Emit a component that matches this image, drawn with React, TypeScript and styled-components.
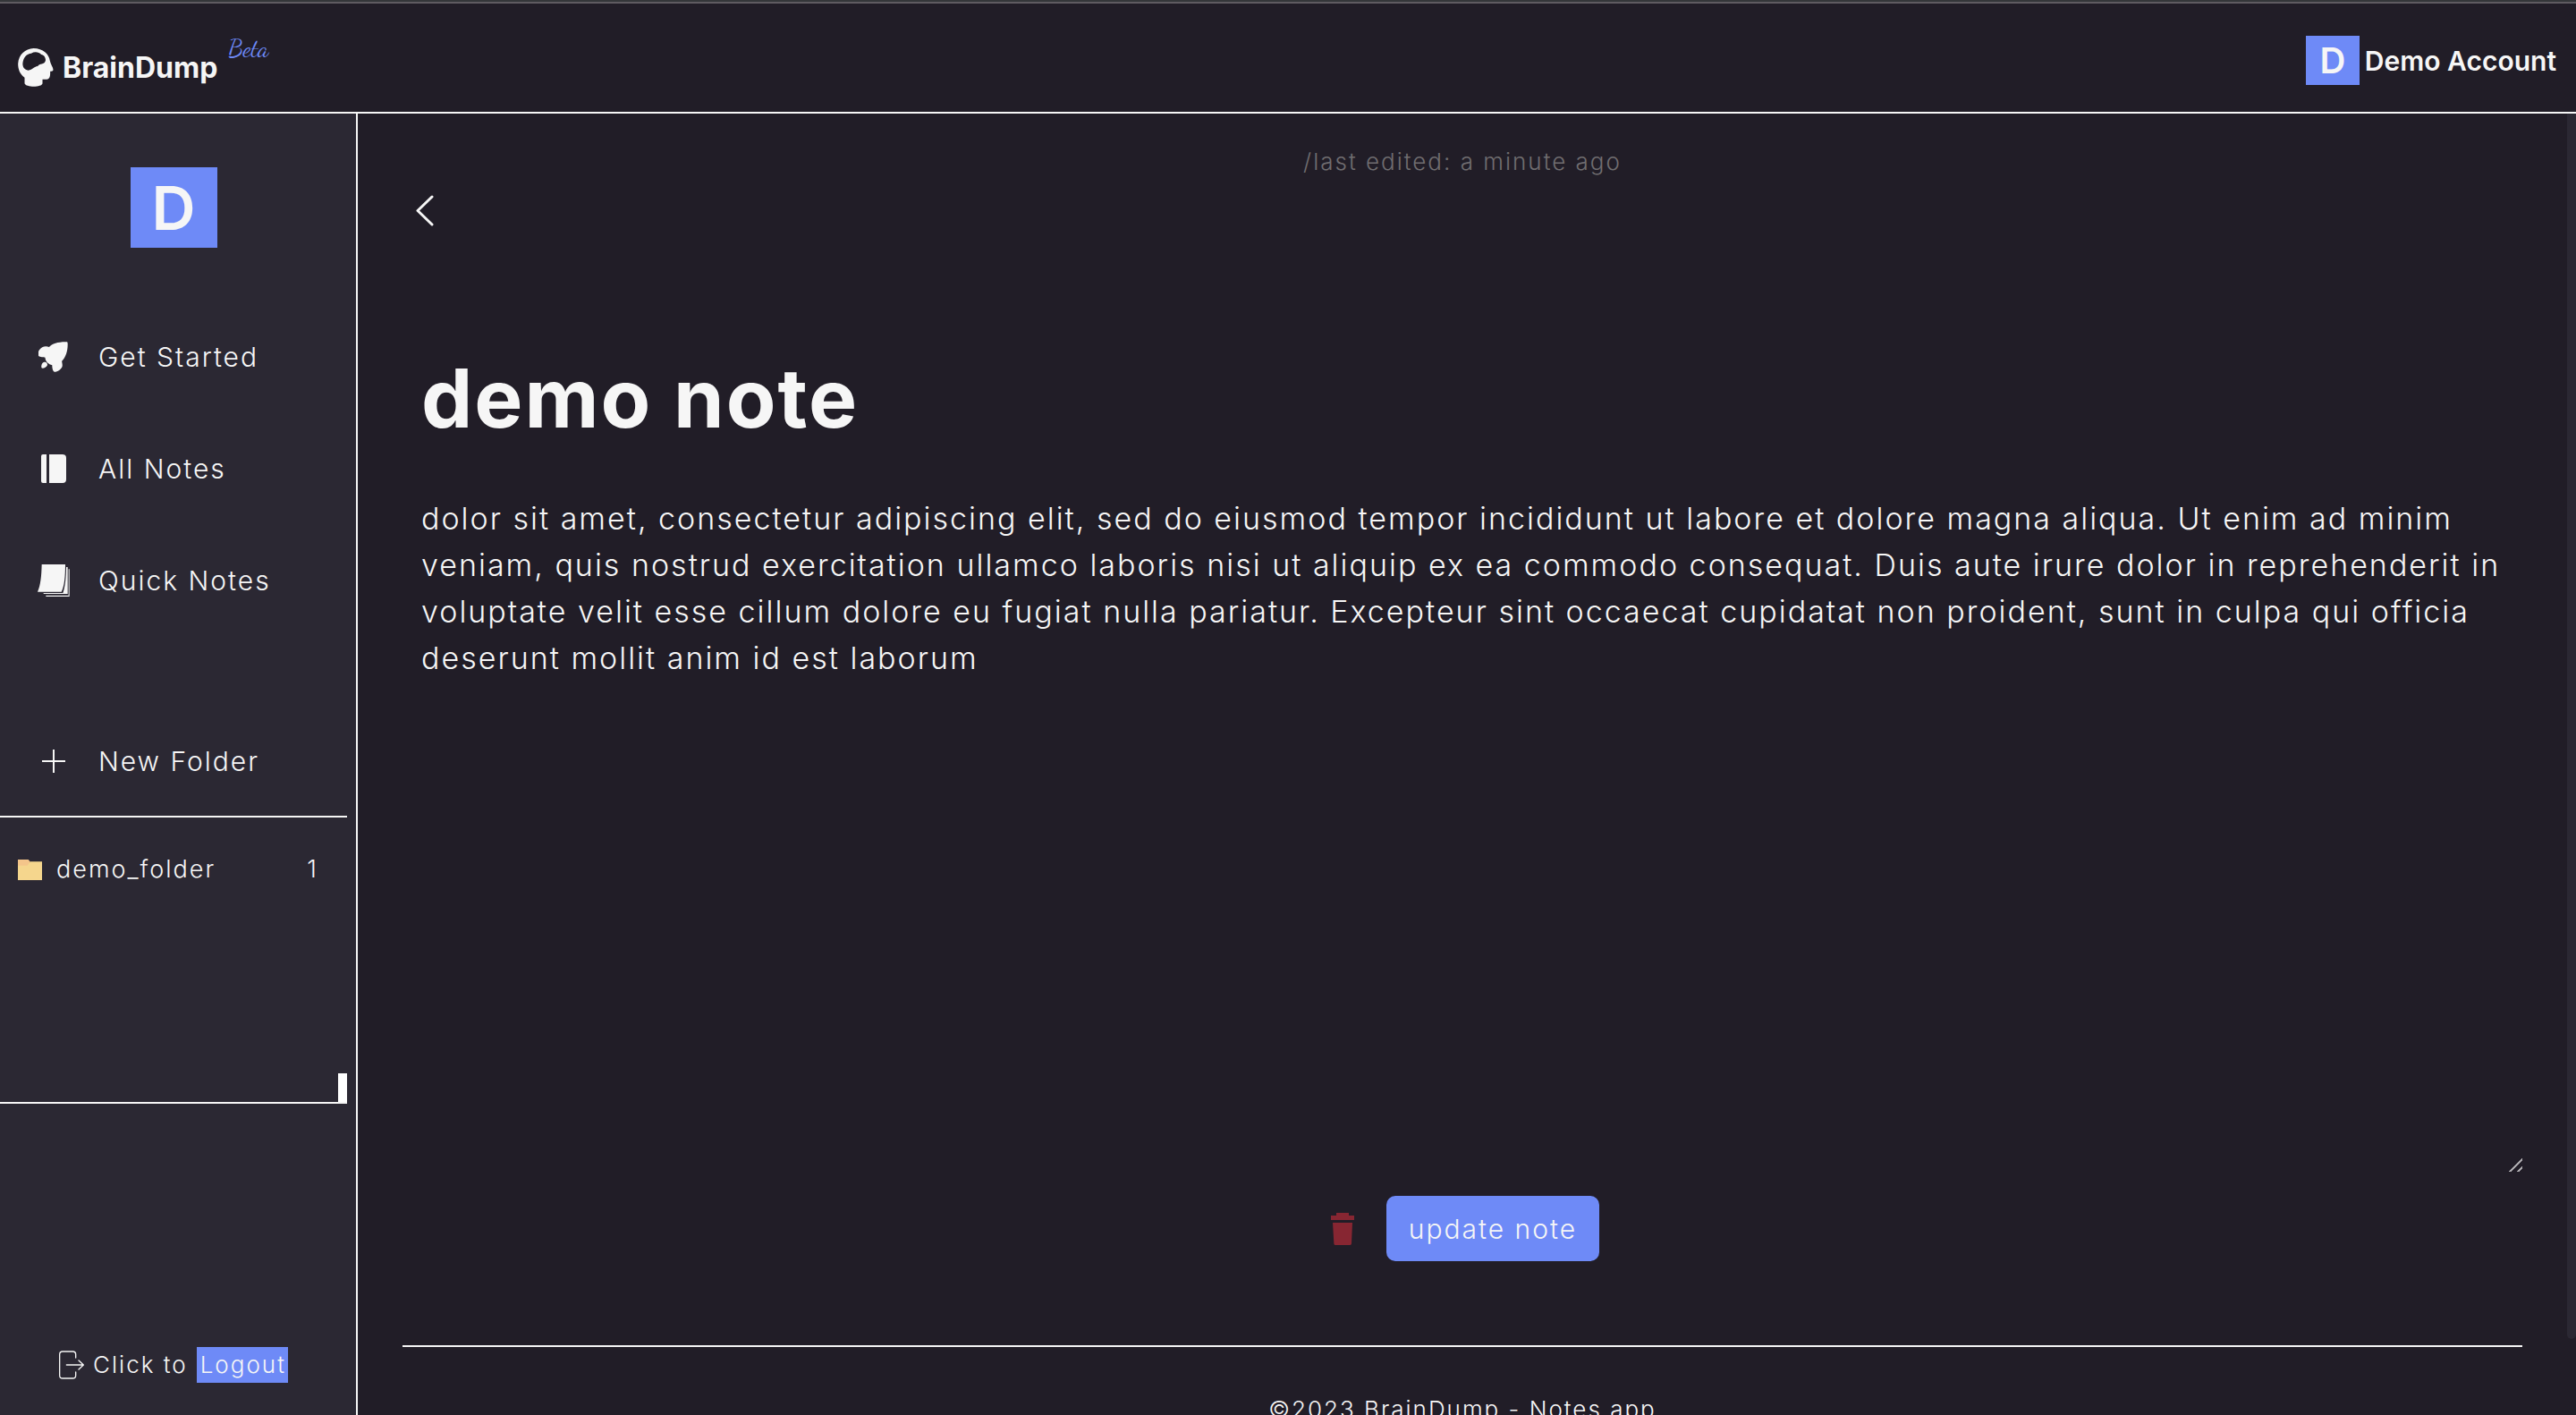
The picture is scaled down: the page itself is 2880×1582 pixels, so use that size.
import React, { useState } from 'react';
import styled, { createGlobalStyle } from 'styled-components';

const color = {
  page: '#211d27',
  panel: '#2b2833',
  text: '#f6f6f6',
  muted: '#706d70',
  accent: '#6e8af7',
  danger: '#872632',
};

const GlobalStyle = createGlobalStyle`
  *, *::before, *::after { box-sizing: border-box; }
  body {
    margin: 0;
    background: ${color.page};
    color: ${color.text};
    font-family: Inter, "Liberation Sans", sans-serif;
    font-size: 26px;
    font-weight: 300;
    letter-spacing: 2px;
    line-height: 36px;
  }
  button, input, textarea { font: inherit; letter-spacing: inherit; color: inherit; }
  svg { display: block; }
`;

const Page = styled.div`
  display: flex;
  flex-direction: column;
  height: 100vh;
  overflow: hidden;
  border-top: 2px solid #343639;
`;

const TopBar = styled.header`
  display: flex;
  flex: none;
  justify-content: space-between;
  align-items: flex-start;
  padding: 36px 22px 28px 20px;
  border-top: 2px solid #5f5b61;
  border-bottom: 2px solid ${color.text};
  font-weight: 700;
  letter-spacing: normal;
`;

const Brand = styled.a`
  display: flex;
  align-items: flex-start;
  color: inherit;
  text-decoration: none;
`;

const BrandMark = styled.svg`
  width: 40px;
  height: 43px;
  margin: 14px 10px 0 0;
`;

const BrandName = styled.span`
  margin-top: 18px;
  font-size: 32px;
`;

const Beta = styled.sup`
  margin-left: 12px;
  color: ${color.accent};
  font-family: "Dancing Script", "Liberation Serif", cursive;
  font-size: 27px;
  font-weight: 400;
  line-height: 30px;
`;

const Account = styled.div`
  display: flex;
  align-items: center;
  gap: 6px;
  font-size: 30px;
  font-weight: 600;
`;

const Avatar = styled.span<{ $large?: boolean }>`
  display: grid;
  flex: none;
  place-items: center;
  width: ${(p) => (p.$large ? 97 : 60)}px;
  height: ${(p) => (p.$large ? 90 : 55)}px;
  background: ${color.accent};
  font-size: ${(p) => (p.$large ? 68 : 40)}px;
  font-weight: 600;
  letter-spacing: normal;
`;

const Body = styled.div`
  display: flex;
  flex: 1;
  min-height: 0;
`;

const Sidebar = styled.aside`
  display: flex;
  flex: none;
  flex-direction: column;
  align-items: center;
  width: 400px;
  padding: 60px 10px 36px 0;
  background: ${color.panel};
  border-right: 2px solid ${color.text};
`;

const Nav = styled.nav`
  display: flex;
  flex-direction: column;
  align-self: stretch;
  gap: 80px;
  margin: 99px 0 157px;
`;

const NavItem = styled.a`
  display: flex;
  align-items: center;
  gap: 31px;
  height: 45px;
  padding: 0 0 0 41px;
  color: inherit;
  font-size: 30px;
  text-decoration: none;
`;

const NewFolder = styled(NavItem).attrs({ as: 'button', type: 'button' })`
  align-self: stretch;
  background: none;
  border: 0;
`;

const IconSlot = styled.span`
  display: grid;
  place-items: center;
  width: 38px;
`;

const FolderPanel = styled.section`
  display: flex;
  flex-direction: column;
  justify-content: space-between;
  align-self: stretch;
  height: 322px;
  margin-top: 39px;
  border-top: 2px solid ${color.text};
  border-bottom: 2px solid ${color.text};
`;

const FolderList = styled.ul`
  margin: 0;
  padding: 40px 32px 0 20px;
  font-size: 27px;
  list-style: none;
`;

const FolderRow = styled.li`
  display: flex;
  align-items: center;
  gap: 16px;
`;

const FolderCount = styled.span`
  margin-left: auto;
`;

const FolderThumb = styled.div`
  align-self: flex-end;
  width: 10px;
  height: 32px;
  background: #fff;
`;

const LogoutRow = styled.div`
  display: flex;
  align-items: center;
  gap: 10px;
  margin-top: auto;
`;

const LogoutButton = styled.button`
  height: 40px;
  padding: 0 2px 0 4px;
  background: ${color.accent};
  border: 0;
`;

const Main = styled.main`
  display: flex;
  flex: 1;
  flex-direction: column;
  min-width: 0;
  overflow: hidden;
  padding: 36px 50px 0;
`;

const Edited = styled.p`
  flex: none;
  margin: 0;
  color: ${color.muted};
  text-align: center;
`;

const BackButton = styled.button`
  display: grid;
  flex: none;
  place-items: center;
  width: 50px;
  height: 50px;
  margin-top: 11px;
  padding: 0;
  background: none;
  border: 0;
`;

const NoteForm = styled.form`
  display: flex;
  flex: none;
  flex-direction: column;
`;

const TitleInput = styled.input`
  width: 100%;
  margin: 130px 0 54px;
  padding: 0 21px;
  background: none;
  border: 0;
  outline: 0;
  && {
    font-size: 91px;
    font-weight: 700;
    line-height: 110px;
  }
`;

const NoteText = styled.textarea`
  display: block;
  width: 100%;
  height: 756px;
  padding: 0 21px;
  background: none;
  border: 0;
  outline: 0;
  resize: vertical;
  && {
    font-size: 34px;
    line-height: 52px;
  }
  &::-webkit-resizer {
    background: linear-gradient(
      135deg,
      transparent 48%,
      #aaa8ac 48%,
      #aaa8ac 57%,
      transparent 57%,
      transparent 78%,
      #aaa8ac 78%,
      #aaa8ac 87%,
      transparent 87%
    );
  }
`;

const Actions = styled.div`
  display: flex;
  justify-content: center;
  align-items: center;
  gap: 36px;
  margin-top: 27px;
  padding-left: 6px;
`;

const DeleteButton = styled.button`
  padding: 0;
  background: none;
  border: 0;
  color: ${color.danger};
`;

const UpdateButton = styled.button`
  height: 73px;
  padding: 0 25px;
  background: ${color.accent};
  border: 0;
  border-radius: 10px;
  && { font-size: 30px; }
`;

const Footer = styled.footer`
  flex: none;
  margin-top: 94px;
  padding-top: 52px;
  border-top: 2px solid ${color.text};
  text-align: center;
`;

const ScrollTrack = styled.div`
  flex: none;
  width: 10px;
  padding-bottom: 85px;
`;

const ScrollThumb = styled.div`
  height: 100%;
  background: ${color.panel};
  border-radius: 0 0 5px 5px;
`;

const Rocket = () => (
  <svg width="34" height="34" viewBox="3 0 100 100" fill="currentColor" aria-hidden="true">
    <path d="M97 1C70 0 48 6 38 18C26 12 12 18 7 26C1 34-2 42 3 46C9 52 20 50 25 52C26 66 36 74 48 77C48 86 50 98 56 99C66 99 78 90 81 82C83 76 80 68 80 64C94 50 100 26 99 6Q99 1 97 1Z" />
    <path d="M22 67C29 66 34 72 32 78C29 85 20 88 14 87C11 84 12 70 22 67Z" />
  </svg>
);

const Book = () => (
  <svg width="28" height="32" viewBox="0 0 28 32" fill="currentColor" aria-hidden="true">
    <path d="M2 0H6V32H2Q0 32 0 30V2Q0 0 2 0ZM9 0H24Q28 0 28 4V28Q28 32 24 32H9Z" />
  </svg>
);

const Stack = () => (
  <svg width="36" height="36" viewBox="0 0 108 108" fill="currentColor" aria-hidden="true">
    <path d="M14 0H93C93 40 90 75 80 92H0C10 70 13 40 14 0Z" />
    <path d="M96 9H101V99H20V96H85C93 75 96 40 96 9Z" />
    <path d="M104 16H107V108H28V104H104Z" />
  </svg>
);

const Plus = () => (
  <svg width="26" height="26" viewBox="0 0 26 26" stroke="currentColor" strokeWidth="2" aria-hidden="true">
    <path d="M13 0V26M0 13H26" />
  </svg>
);

const FolderIcon = () => (
  <svg width="27" height="23" viewBox="0 0 81 69" aria-hidden="true">
    <path d="M0 0H35L41 7V24H0Z" fill="#f4c58a" />
    <path d="M0 20H32L42 7H81V69H0Z" fill="#f5d68d" />
  </svg>
);

const ExitIcon = () => (
  <svg width="28" height="32" viewBox="0 0 84 94" fill="none" stroke="currentColor" strokeWidth="4" strokeLinecap="round" strokeLinejoin="round" aria-hidden="true">
    <path d="M56 23V12Q56 2 46 2H12Q2 2 2 12V82Q2 92 12 92H46Q56 92 56 82V71M25 47H82M66 32L82 47L66 62" />
  </svg>
);

const Chevron = () => (
  <svg width="20" height="35" viewBox="0 0 20 35" fill="none" stroke="currentColor" strokeWidth="3" strokeLinecap="round" strokeLinejoin="round" aria-hidden="true">
    <path d="M18 2L2 17.5L18 33" />
  </svg>
);

const Trash = () => (
  <svg width="26" height="36" viewBox="0 0 78 108" fill="currentColor" aria-hidden="true">
    <path d="M18 0H60V9H78V24H0V9H18ZM6 33H72L69 103Q69 108 64 108H14Q10 108 10 103Z" />
  </svg>
);

const navItems = [
  { label: 'Get Started', Icon: Rocket },
  { label: 'All Notes', Icon: Book },
  { label: 'Quick Notes', Icon: Stack },
];

const folders = [{ name: 'demo_folder', count: 1 }];

export default function App() {
  const [title, setTitle] = useState('demo note');
  const [text, setText] = useState(
    'dolor sit amet, consectetur adipiscing elit, sed do eiusmod tempor incididunt ut labore et dolore magna aliqua. Ut enim ad minim veniam, quis nostrud exercitation ullamco laboris nisi ut aliquip ex ea commodo consequat. Duis aute irure dolor in reprehenderit in voluptate velit esse cillum dolore eu fugiat nulla pariatur. Excepteur sint occaecat cupidatat non proident, sunt in culpa qui officia deserunt mollit anim id est laborum',
  );

  return (
    <>
      <GlobalStyle />
      <Page>
        <TopBar>
          <Brand href="#home">
            <BrandMark viewBox="0 0 119 129" aria-hidden="true">
              <path
                fill="currentColor"
                fillRule="evenodd"
                d="M52 0C84 0 104 20 107 42C109 54 118 64 118 72C118 77 112 77 108 77C108 90 108 103 96 104H82V118C80 132 26 132 22 118V98C6 88 0 70 0 52C2 20 24 2 52 0ZM16 48C14 60 20 72 34 74C50 72 52 62 66 60C72 50 88 56 92 42C94 34 88 22 78 21C70 12 56 10 44 17C30 18 18 30 16 48Z"
              />
            </BrandMark>
            <BrandName>BrainDump</BrandName>
            <Beta>Beta</Beta>
          </Brand>
          <Account>
            <Avatar>D</Avatar>
            <span>Demo Account</span>
          </Account>
        </TopBar>
        <Body>
          <Sidebar>
            <Avatar $large>D</Avatar>
            <Nav>
              {navItems.map(({ label, Icon }) => (
                <NavItem key={label} href="#notes">
                  <IconSlot><Icon /></IconSlot>
                  {label}
                </NavItem>
              ))}
            </Nav>
            <NewFolder>
              <IconSlot><Plus /></IconSlot>
              New Folder
            </NewFolder>
            <FolderPanel>
              <FolderList>
                {folders.map((f) => (
                  <FolderRow key={f.name}>
                    <FolderIcon />
                    {f.name}
                    <FolderCount>{f.count}</FolderCount>
                  </FolderRow>
                ))}
              </FolderList>
              <FolderThumb />
            </FolderPanel>
            <LogoutRow>
              <ExitIcon />
              <span>Click to</span>
              <LogoutButton type="button">Logout</LogoutButton>
            </LogoutRow>
          </Sidebar>
          <Main>
            <Edited>/last edited: a minute ago</Edited>
            <BackButton type="button" aria-label="Back"><Chevron /></BackButton>
            <NoteForm onSubmit={(e) => e.preventDefault()}>
              <TitleInput aria-label="Note title" value={title} onChange={(e) => setTitle(e.target.value)} />
              <NoteText aria-label="Note text" spellCheck={false} value={text} onChange={(e) => setText(e.target.value)} />
              <Actions>
                <DeleteButton type="button" aria-label="Delete note"><Trash /></DeleteButton>
                <UpdateButton type="submit">update note</UpdateButton>
              </Actions>
            </NoteForm>
            <Footer>©2023 BrainDump - Notes app</Footer>
          </Main>
          <ScrollTrack><ScrollThumb /></ScrollTrack>
        </Body>
      </Page>
    </>
  );
}
